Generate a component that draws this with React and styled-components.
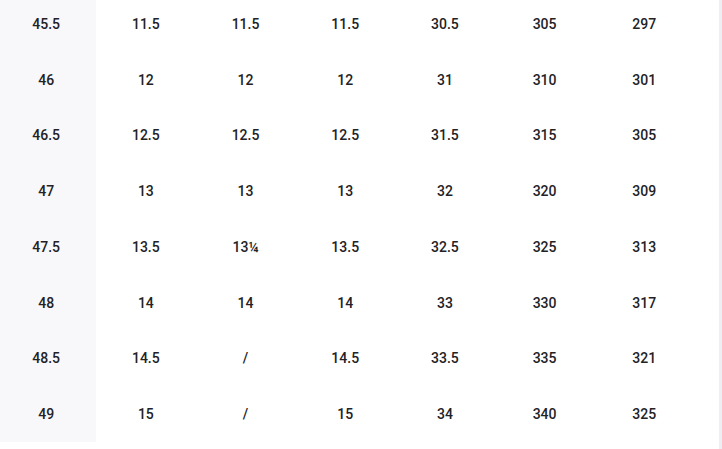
import React from "react";
import styled, { createGlobalStyle } from "styled-components";

const Global = createGlobalStyle`
  html, body { margin: 0; padding: 0; background: #fff; overflow: hidden; }
  body { font-family: Roboto, "Noto Sans", "Liberation Sans", sans-serif; }
`;

const Frame = styled.div`
  display: flex;
  width: 722px;
  height: 449px;
  overflow: hidden;
`;

const Viewport = styled.div`
  flex: 1;
  overflow: hidden;
`;

const Track = styled.div`
  width: 3px;
  background: #eeeef3;
`;

const Table = styled.div`
  display: grid;
  grid-template-columns: repeat(7, 99.7px);
  grid-auto-rows: 55.75px;
  margin: -4px 0 0 -3.7px;
`;

const Cell = styled.div`
  display: flex;
  align-items: center;
  justify-content: center;
  font-size: 14px;
  font-weight: 500;
  color: #222226;
  background: ${(p) => (p.$head ? "#f8f8fa" : "#fff")};
`;

const rows = [
  ["45.5", "11.5", "11.5", "11.5", "30.5", "305", "297"],
  ["46", "12", "12", "12", "31", "310", "301"],
  ["46.5", "12.5", "12.5", "12.5", "31.5", "315", "305"],
  ["47", "13", "13", "13", "32", "320", "309"],
  ["47.5", "13.5", "13¼", "13.5", "32.5", "325", "313"],
  ["48", "14", "14", "14", "33", "330", "317"],
  ["48.5", "14.5", "/", "14.5", "33.5", "335", "321"],
  ["49", "15", "/", "15", "34", "340", "325"],
];

export default function App() {
  return (
    <>
      <Global />
      <Frame>
        <Viewport>
          <Table>
            {rows.map((r, i) =>
              r.map((v, j) => (
                <Cell key={`${i}-${j}`} $head={j === 0}>
                  {v}
                </Cell>
              ))
            )}
          </Table>
        </Viewport>
        <Track />
      </Frame>
    </>
  );
}
